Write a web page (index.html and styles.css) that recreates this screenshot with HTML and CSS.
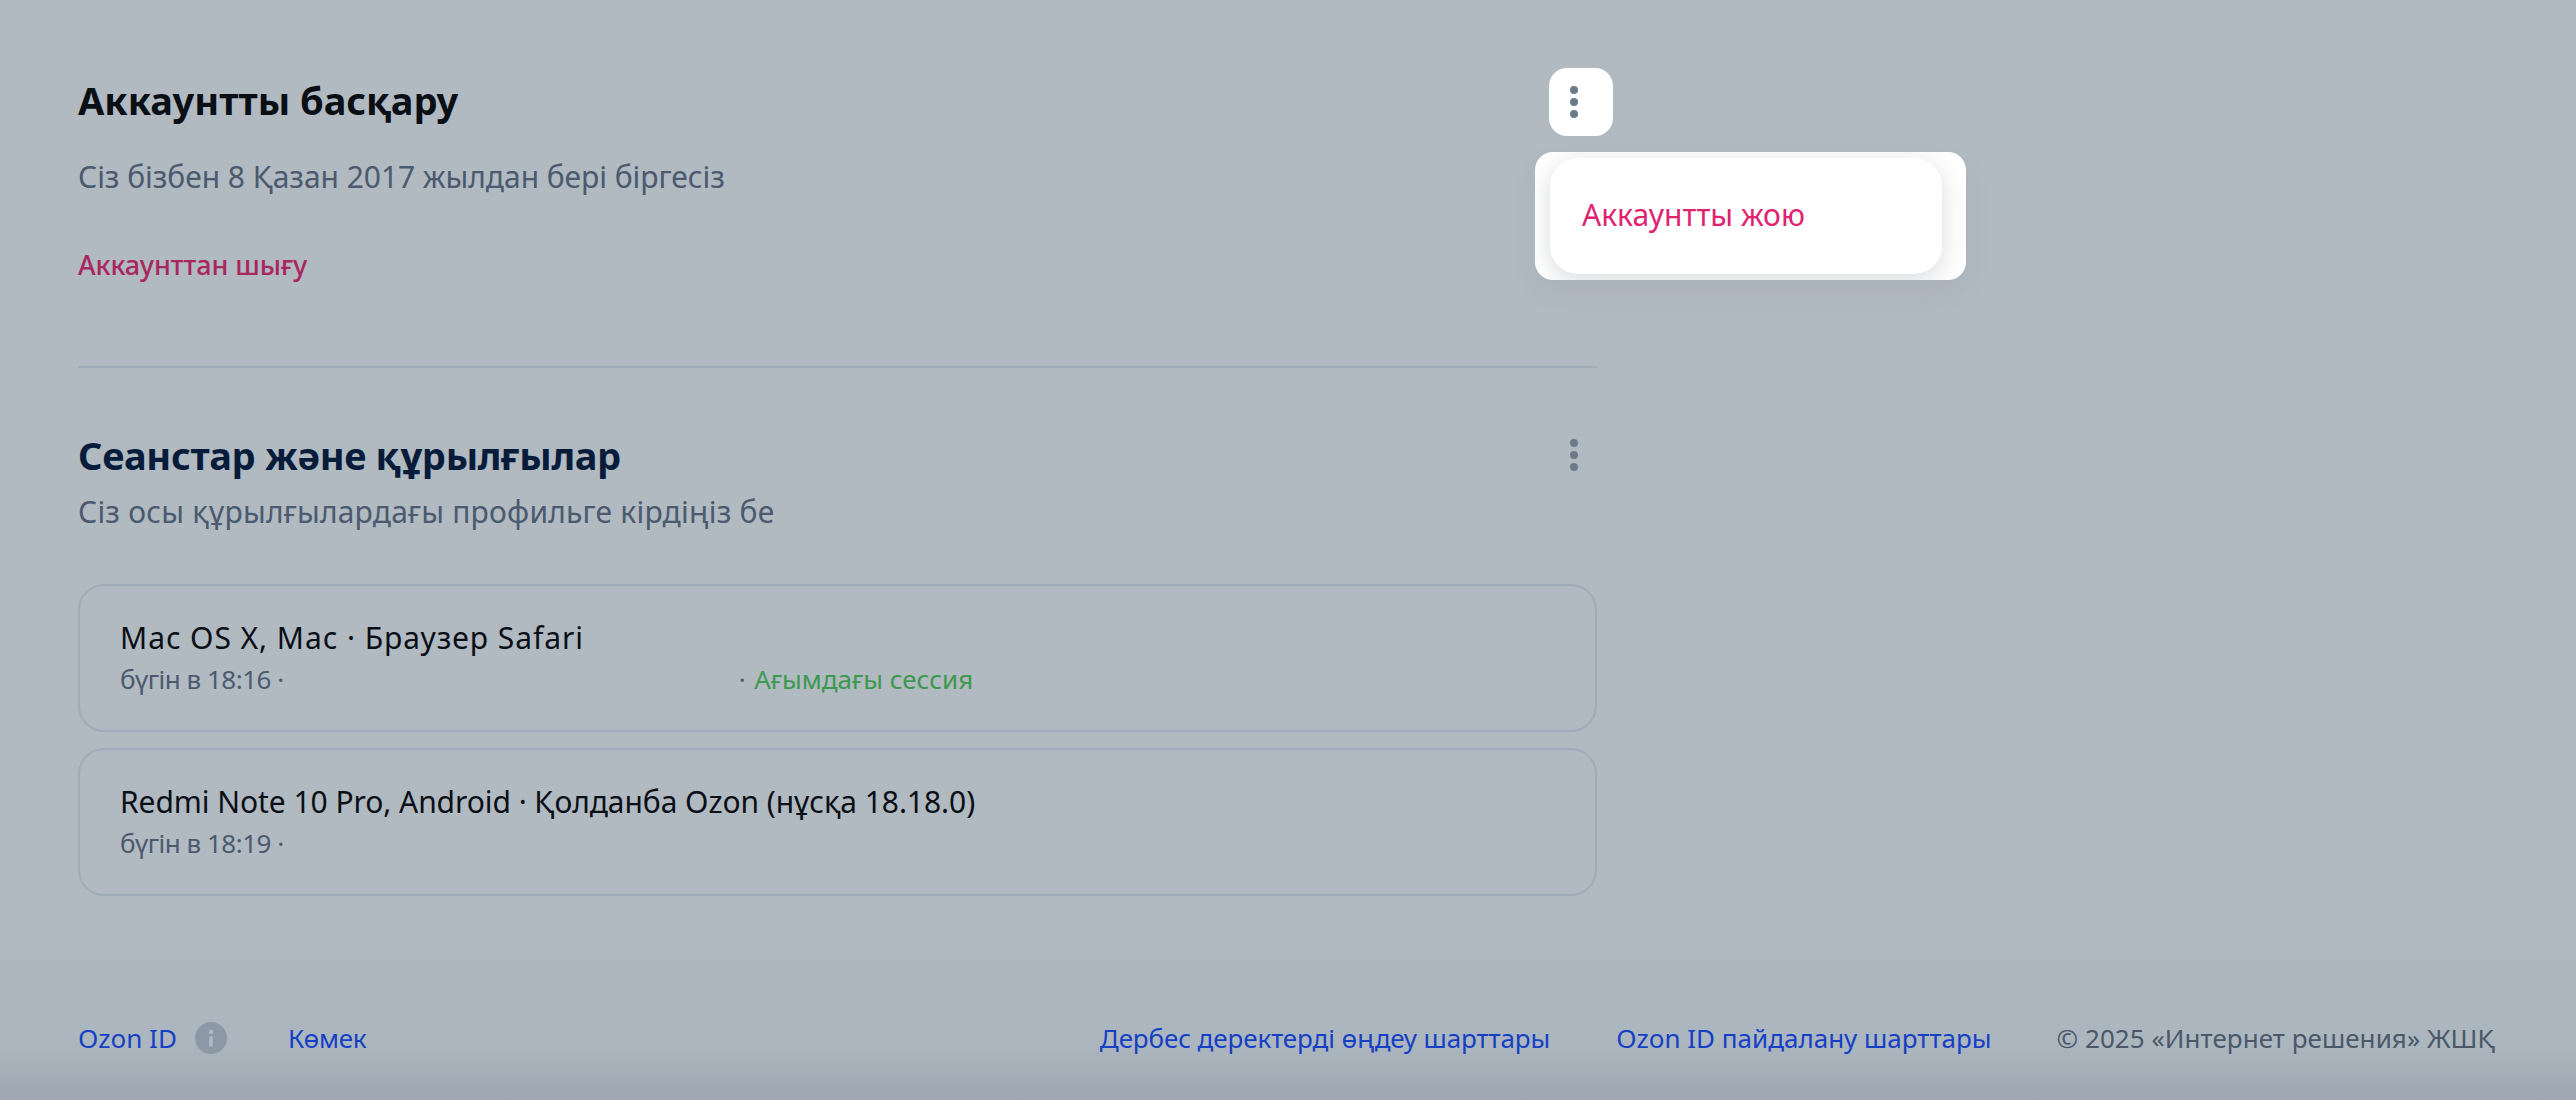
FILE: index.html
```html
<!DOCTYPE html>
<html lang="kk">
<head>
  <meta charset="UTF-8">
  <title>Ozon ID</title>
  <link rel="stylesheet" href="styles.css">
</head>
<body>
  <main class="content">
    <section class="manage">
      <div class="section-head">
        <h2 class="title title-dark">Аккаунтты басқару</h2>
        <button class="kebab kebab-open">
          <svg width="8" height="32" viewBox="0 0 8 32"><circle cx="4" cy="4" r="4"/><circle cx="4" cy="16" r="4"/><circle cx="4" cy="28" r="4"/></svg>
        </button>
      </div>
      <p class="lead lead-since">Сіз бізбен 8 Қазан 2017 жылдан бері біргесіз</p>
      <a class="logout">Аккаунттан шығу</a>
      <div class="popup">
        <div class="popup-card"><span class="popup-item">Аккаунтты жою</span></div>
      </div>
    </section>

    <hr class="rule">

    <section class="sessions">
      <div class="section-head">
        <h2 class="title title-navy">Сеанстар және құрылғылар</h2>
        <button class="kebab">
          <svg width="8" height="32" viewBox="0 0 8 32"><circle cx="4" cy="4" r="4"/><circle cx="4" cy="16" r="4"/><circle cx="4" cy="28" r="4"/></svg>
        </button>
      </div>
      <p class="lead lead-devices">Сіз осы құрылғылардағы профильге кірдіңіз бе</p>
      <div class="session-list">
        <div class="session">
          <div class="session-name name-mac">Mac OS X, Mac · Браузер Safari</div>
          <div class="session-meta">
            <span class="meta-time">бүгін в 18:16 ·</span>
            <span class="meta-hidden"></span>
            <span class="meta-time">·</span>
            <span class="meta-current">Ағымдағы сессия</span>
          </div>
        </div>
        <div class="session">
          <div class="session-name name-redmi">Redmi Note 10 Pro, Android · Қолданба Ozon (нұсқа 18.18.0)</div>
          <div class="session-meta">
            <span class="meta-time">бүгін в 18:19 ·</span>
          </div>
        </div>
      </div>
    </section>
  </main>

  <footer class="footer">
    <div class="footer-left">
      <a class="link link-id">Ozon ID</a>
      <svg class="info" width="32" height="32" viewBox="0 0 32 32"><circle cx="16" cy="16" r="16" fill="#8c98a6"/><circle cx="16" cy="10" r="2.2" fill="#b1b9c1"/><rect x="14.2" y="14" width="3.6" height="11" rx="1.8" fill="#b1b9c1"/></svg>
      <a class="link link-help">Көмек</a>
    </div>
    <div class="footer-right">
      <a class="link link-terms">Дербес деректерді өңдеу шарттары</a>
      <a class="link link-use">Ozon ID пайдалану шарттары</a>
      <span class="copy">© 2025 «Интернет решения» ЖШҚ</span>
    </div>
  </footer>
</body>
</html>
```

FILE: styles.css
```css
* {
  box-sizing: border-box;
}
body {
  margin: 0;
  background: #b1b9c1;
  font-family: 'Noto Sans', sans-serif;
  color: #0a0f16;
  height: 1100px;
  overflow: hidden;
}
.content {
  width: 1597px;
  padding: 68px 0 0 78px;
}
.manage {
  position: relative;
}
.section-head {
  display: flex;
  align-items: center;
  justify-content: space-between;
  height: 68px;
}
.title {
  margin: 0;
  font-size: 38px;
  font-weight: 700;
  line-height: 44px;
}
.title-dark {
  margin-bottom: 4px;
  color: #0a0f16;
}
.title-navy {
  color: #071c3a;
  letter-spacing: -0.35px;
}
.kebab {
  width: 64px;
  height: 68px;
  margin-right: -16px;
  padding: 0 0 0 21px;
  display: flex;
  align-items: center;
  background: none;
  border: none;
  border-radius: 18px;
  fill: #6d7a89;
}
.kebab-open {
  background: #fff;
}
.lead {
  margin: 0;
  font-size: 30px;
  line-height: 40px;
  color: #4b5a6e;
}
.lead-since {
  margin-top: 21px;
  letter-spacing: -0.05px;
}
.lead-devices {
  margin-top: 3px;
  letter-spacing: 0.2px;
}
.logout {
  display: block;
  margin-top: 50px;
  font-size: 27px;
  font-weight: 500;
  line-height: 36px;
  letter-spacing: -0.1px;
  color: #a8275f;
}
.popup {
  position: absolute;
  top: 84px;
  left: 1457px;
  width: 431px;
  height: 128px;
  padding: 6px 24px 6px 15px;
  background: #fff;
  border-radius: 18px;
  overflow: hidden;
  box-shadow: 0 12px 30px rgba(40, 50, 65, 0.05);
}
.popup-card {
  height: 116px;
  padding: 0 0 3px 32px;
  display: flex;
  align-items: center;
  background: #fff;
  border-radius: 28px;
  box-shadow: 0 6px 24px rgba(40, 50, 65, 0.18);
}
.popup-item {
  font-size: 30px;
  color: #e0236f;
}
.rule {
  margin: 83px 0 0;
  height: 2px;
  background: #a0acb9;
  border: none;
}
.sessions {
  margin-top: 53px;
}
.session-list {
  margin-top: 52px;
  display: flex;
  flex-direction: column;
  gap: 16px;
}
.session {
  height: 148px;
  padding: 32px 40px 0;
  border: 2px solid #a0acb9;
  border-radius: 26px;
}
.session-name {
  font-size: 30px;
  line-height: 40px;
  color: #0a0f16;
}
.name-mac {
  letter-spacing: 0.95px;
}
.name-redmi {
  letter-spacing: -0.06px;
}
.session-meta {
  margin-top: 4px;
  display: flex;
  align-items: center;
  font-size: 26px;
  line-height: 34px;
}
.meta-time {
  color: #4b5a6e;
  letter-spacing: -0.5px;
}
.meta-hidden {
  width: 455px;
}
.meta-current {
  margin-left: 9px;
  color: #3c9a4e;
}
.footer {
  margin-top: 64px;
  height: 140px;
  padding: 16px 81px 0 78px;
  display: flex;
  align-items: center;
  justify-content: space-between;
  background: linear-gradient(#acb6bf, #acb6bf 60%, #9ea7b1);
  font-size: 26px;
}
.footer-left,
.footer-right {
  display: flex;
  align-items: center;
}
.link {
  color: #1540c4;
}
.info {
  margin-left: 18px;
}
.link-help {
  margin-left: 61px;
  letter-spacing: -0.3px;
}
.link-terms {
  letter-spacing: -0.1px;
}
.link-use {
  margin-left: 66px;
}
.copy {
  margin-left: 65px;
  color: #4a5868;
  letter-spacing: 0.05px;
}
```
